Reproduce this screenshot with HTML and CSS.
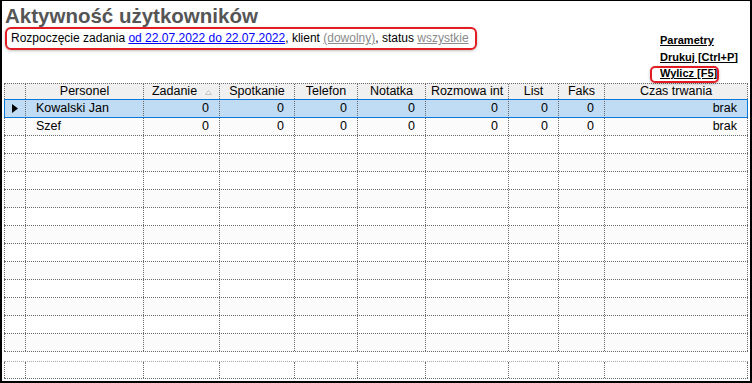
FILE: index.html
```html
<!DOCTYPE html>
<html lang="pl">
<head>
<meta charset="utf-8">
<title>Aktywność użytkowników</title>
<link rel="stylesheet" href="styles.css">
</head>
<body>
<div class="frame">
  <div class="top">
    <div class="left">
      <h1 class="title">Aktywność użytkowników</h1>
      <div class="filter">Rozpoczęcie zadania <a class="lnk-blue" href="#">od 22.07.2022 do 22.07.2022</a>, klient <a class="lnk-gray" href="#">(dowolny)</a>, status <a class="lnk-gray" href="#">wszystkie</a></div>
    </div>
    <div class="actions">
      <a class="act" href="#">Parametry</a>
      <a class="act" href="#">Drukuj [Ctrl+P]</a>
      <a class="act marked" href="#">Wylicz [F5]<span class="mark"></span></a>
    </div>
  </div>

  <div class="grid">
    <div class="row head">
      <div class="c"></div>
      <div class="c">Personel</div>
      <div class="c sorted">Zadanie<svg class="sort" width="7" height="5" viewBox="0 0 7 5"><path d="M3.5 0.5 L6.5 4.5 L0.5 4.5 Z" fill="#f4f4f4" stroke="#c4c4c4" stroke-width="1"/></svg></div>
      <div class="c">Spotkanie</div>
      <div class="c">Telefon</div>
      <div class="c">Notatka</div>
      <div class="c">Rozmowa int</div>
      <div class="c">List</div>
      <div class="c">Faks</div>
      <div class="c">Czas trwania</div>
    </div>
    <div class="row sel">
      <div class="c ind"><svg width="6" height="9" viewBox="0 0 6 9"><path d="M0 0 L6 4.5 L0 9 Z" fill="#000"/></svg></div>
      <div class="c txt">Kowalski Jan</div>
      <div class="c num">0</div>
      <div class="c num">0</div>
      <div class="c num">0</div>
      <div class="c num">0</div>
      <div class="c num">0</div>
      <div class="c num">0</div>
      <div class="c num">0</div>
      <div class="c num">brak</div>
    </div>
    <div class="row alt">
      <div class="c ind"></div>
      <div class="c txt">Szef</div>
      <div class="c num">0</div>
      <div class="c num">0</div>
      <div class="c num">0</div>
      <div class="c num">0</div>
      <div class="c num">0</div>
      <div class="c num">0</div>
      <div class="c num">0</div>
      <div class="c num">brak</div>
    </div>
    <div class="row"><div class="c"></div><div class="c"></div><div class="c"></div><div class="c"></div><div class="c"></div><div class="c"></div><div class="c"></div><div class="c"></div><div class="c"></div><div class="c"></div></div>
    <div class="row alt"><div class="c"></div><div class="c"></div><div class="c"></div><div class="c"></div><div class="c"></div><div class="c"></div><div class="c"></div><div class="c"></div><div class="c"></div><div class="c"></div></div>
    <div class="row"><div class="c"></div><div class="c"></div><div class="c"></div><div class="c"></div><div class="c"></div><div class="c"></div><div class="c"></div><div class="c"></div><div class="c"></div><div class="c"></div></div>
    <div class="row alt"><div class="c"></div><div class="c"></div><div class="c"></div><div class="c"></div><div class="c"></div><div class="c"></div><div class="c"></div><div class="c"></div><div class="c"></div><div class="c"></div></div>
    <div class="row"><div class="c"></div><div class="c"></div><div class="c"></div><div class="c"></div><div class="c"></div><div class="c"></div><div class="c"></div><div class="c"></div><div class="c"></div><div class="c"></div></div>
    <div class="row alt"><div class="c"></div><div class="c"></div><div class="c"></div><div class="c"></div><div class="c"></div><div class="c"></div><div class="c"></div><div class="c"></div><div class="c"></div><div class="c"></div></div>
    <div class="row"><div class="c"></div><div class="c"></div><div class="c"></div><div class="c"></div><div class="c"></div><div class="c"></div><div class="c"></div><div class="c"></div><div class="c"></div><div class="c"></div></div>
    <div class="row alt"><div class="c"></div><div class="c"></div><div class="c"></div><div class="c"></div><div class="c"></div><div class="c"></div><div class="c"></div><div class="c"></div><div class="c"></div><div class="c"></div></div>
    <div class="row"><div class="c"></div><div class="c"></div><div class="c"></div><div class="c"></div><div class="c"></div><div class="c"></div><div class="c"></div><div class="c"></div><div class="c"></div><div class="c"></div></div>
    <div class="row alt"><div class="c"></div><div class="c"></div><div class="c"></div><div class="c"></div><div class="c"></div><div class="c"></div><div class="c"></div><div class="c"></div><div class="c"></div><div class="c"></div></div>
    <div class="row"><div class="c"></div><div class="c"></div><div class="c"></div><div class="c"></div><div class="c"></div><div class="c"></div><div class="c"></div><div class="c"></div><div class="c"></div><div class="c"></div></div>
    <div class="row alt"><div class="c"></div><div class="c"></div><div class="c"></div><div class="c"></div><div class="c"></div><div class="c"></div><div class="c"></div><div class="c"></div><div class="c"></div><div class="c"></div></div>

    <div class="row summary"><div class="c"></div><div class="c"></div><div class="c"></div><div class="c"></div><div class="c"></div><div class="c"></div><div class="c"></div><div class="c"></div><div class="c"></div><div class="c"></div></div>
  </div>
</div>
</body>
</html>
```

FILE: styles.css
```css
html, body {
  margin: 0;
  padding: 0;
  background: #fff;
}

body {
  font-family: "Liberation Sans", Arial, sans-serif;
  color: #000;
}

.frame {
  box-sizing: border-box;
  width: 752px;
  height: 383px;
  border-style: solid;
  border-color: #000;
  border-width: 1px 2px 2px 2px;
  overflow: hidden;
}

.top {
  display: flex;
  justify-content: space-between;
  height: 82px;
}

.title {
  margin: 4px 0 0 3px;
  font-size: 20.5px;
  line-height: 22px;
  font-weight: bold;
  color: #555;
}

.filter {
  box-sizing: border-box;
  margin-left: 3px;
  width: 472px;
  height: 23px;
  border: 2px solid #e31b23;
  border-radius: 6px;
  box-shadow: 0 1px 3px rgba(0, 0, 0, 0.25);
  padding: 0 0 0 4px;
  font-size: 12px;
  line-height: 18px;
  white-space: nowrap;
}

.lnk-blue {
  color: #0000ff;
  text-decoration: underline;
}

.lnk-gray {
  color: #8a8a8a;
  text-decoration: underline;
}

.actions {
  width: 90px;
  padding-top: 31px;
  display: flex;
  flex-direction: column;
  align-items: flex-start;
}

.act {
  font-size: 11px;
  line-height: 16.5px;
  font-weight: bold;
  color: #000;
  text-decoration: underline;
}

.marked {
  position: relative;
}

.mark {
  position: absolute;
  left: -10px;
  top: 1px;
  width: 69px;
  height: 17px;
  box-sizing: border-box;
  border: 2px solid #e31b23;
  border-radius: 5px;
  box-shadow: 0 1px 3px rgba(0, 0, 0, 0.25);
}

.grid {
  margin-left: 2px;
  width: 744px;
  font-size: 12.5px;
}

.row {
  display: grid;
  grid-template-columns: 21px 118px 76px 75px 63px 68px 83px 50px 46px 144px;
  box-sizing: border-box;
  height: 18px;
  border-bottom: 1px dotted #6a6a6a;
  line-height: 17px;
}

.c {
  box-sizing: border-box;
  border-left: 1px dotted #6a6a6a;
  white-space: nowrap;
  overflow: hidden;
}

.c:last-child {
  border-right: 1px dotted #6a6a6a;
}

.row.alt {
  background: #fbfbfb;
}

.row.head {
  height: 16px;
  border-top: 1px dotted #6a6a6a;
  border-bottom: 0;
  background: #f0f0f0;
  line-height: 15px;
}

.head .c {
  text-align: center;
}

.head .sorted {
  position: relative;
  padding-right: 14px;
}

.sort {
  position: absolute;
  right: 7px;
  top: 6px;
}

.row.sel {
  position: relative;
  height: 19px;
  border-bottom: 0;
  background: #bfdcf4;
  line-height: 19px;
}

.row.sel::after {
  content: "";
  position: absolute;
  inset: 0;
  border: 1px solid #0a78d6;
  pointer-events: none;
}

.ind {
  display: flex;
  align-items: center;
  justify-content: center;
}

.txt {
  padding-left: 10px;
}

.num {
  text-align: right;
  padding-right: 10px;
}

.row.summary {
  margin-top: 9px;
  height: 18px;
  border-top: 1px dotted #a8a8a8;
  border-bottom: 1px dotted #6a6a6a;
}
```
